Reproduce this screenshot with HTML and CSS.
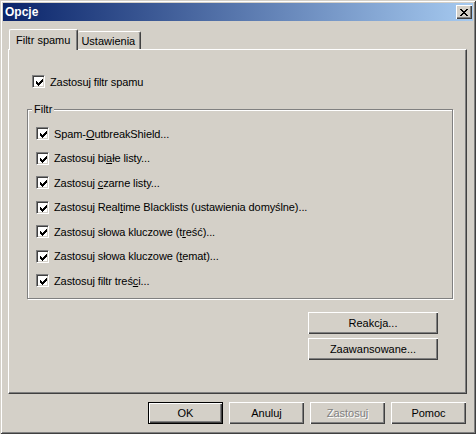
FILE: index.html
```html
<!DOCTYPE html>
<html lang="pl">
<head>
<meta charset="UTF-8">
<title>Opcje</title>
<link rel="stylesheet" href="styles.css">
</head>
<body>
<div class="window">
    <div class="titlebar">
        <span class="title">Opcje</span>
        <button class="close" type="button">
            <svg width="8" height="7" viewBox="0 0 8 7" shape-rendering="crispEdges">
                <path d="M0 0h2v1h-2zM6 0h2v1h-2zM1 1h2v1h-2zM5 1h2v1h-2zM2 2h4v1h-4zM3 3h2v1h-2zM2 4h4v1h-4zM1 5h2v1h-2zM5 5h2v1h-2zM0 6h2v1h-2zM6 6h2v1h-2z" fill="#000"/>
            </svg>
        </button>
    </div>
    <div class="client">
        <div class="tabs">
            <div class="tab active">Filtr spamu</div>
            <div class="tab">Ustawienia</div>
        </div>
        <div class="panel">
            <label class="check main-check"><span class="box"></span><span>Zastosuj filtr spamu</span></label>

            <div class="group">
                <span class="group-title">Filtr</span>
                <label class="check"><span class="box"></span><span>Spam-<u>O</u>utbreakShield...</span></label>
                <label class="check"><span class="box"></span><span>Zastosuj bi<u>a</u>łe listy...</span></label>
                <label class="check"><span class="box"></span><span>Zastosuj <u>c</u>zarne listy...</span></label>
                <label class="check"><span class="box"></span><span>Zastosuj Real<u>t</u>ime Blacklists (ustawienia domyślne)...</span></label>
                <label class="check"><span class="box"></span><span>Zastosuj słowa kluczowe (t<u>r</u>eść)...</span></label>
                <label class="check"><span class="box"></span><span>Zastosuj słowa kluczowe (<u>t</u>emat)...</span></label>
                <label class="check"><span class="box"></span><span>Zastosuj filtr treś<u>c</u>i...</span></label>
            </div>

            <div class="side-buttons">
                <button class="btn wide" type="button">Reakcja...</button>
                <button class="btn wide" type="button">Zaawansowane...</button>
            </div>
        </div>
        <div class="footer">
            <button class="btn default" type="button">OK</button>
            <button class="btn" type="button">Anuluj</button>
            <button class="btn" type="button" disabled>Zastosuj</button>
            <button class="btn" type="button">Pomoc</button>
        </div>
    </div>
</div>
<script>
    // every option starts switched on
    document.querySelectorAll('.box').forEach(function (box) {
        box.innerHTML = '<svg width="7" height="7" viewBox="0 0 7 7" shape-rendering="crispEdges">' +
            '<path d="M0 2h1v3h-1zM1 3h1v3h-1zM2 4h1v3h-1zM3 3h1v3h-1zM4 2h1v3h-1zM5 1h1v3h-1zM6 0h1v3h-1z" fill="#000"/></svg>';
    });
</script>
</body>
</html>
```

FILE: styles.css
```css
body {
    margin: 0;
    padding: 0;
    background-color: #d4d0c8;
    font-family: "Liberation Sans", Arial, sans-serif;
    font-size: 11px;
    color: #000;
}

.window {
    width: 476px;
    height: 434px;
    box-sizing: border-box;
    padding: 3px;
    background-color: #d4d0c8;
    box-shadow: inset 1px 1px #d4d0c8, inset -1px -1px #404040,
                inset 2px 2px #fff, inset -2px -2px #808080;
}

.titlebar {
    height: 18px;
    display: flex;
    align-items: center;
    justify-content: space-between;
    padding-left: 2px;
    background: linear-gradient(to right, #0a246a, #a6caf0);
}

.title {
    color: #fff;
    font-weight: bold;
    font-size: 12px;
}

.close {
    width: 16px;
    height: 14px;
    margin-right: 1px;
    padding: 0;
    border: none;
    background-color: #d4d0c8;
    display: flex;
    align-items: center;
    justify-content: center;
    box-shadow: inset 1px 1px #fff, inset -1px -1px #404040, inset -2px -2px #808080;
}

.client {
    padding: 8px 6px 0 5px;
}

/* tab strip */
.tabs {
    display: flex;
    align-items: flex-end;
    height: 20px;
    padding-left: 1px;
}

.tab {
    height: 18px;
    box-sizing: border-box;
    padding: 3px 5px 0 3px;
    border-top: 1px solid #fff;
    border-left: 1px solid #fff;
    border-right: 1px solid #404040;
    box-shadow: inset -1px 0 #808080;
    border-radius: 2px 2px 0 0;
}

.tab.active {
    height: 21px;
    margin-bottom: -1px;
    padding: 4px 7px 0 6px;
    position: relative;
    z-index: 1;
    background-color: #d4d0c8;
}

.tab + .tab {
    border-left: none;
    padding-left: 3px;
}

.panel {
    height: 345px;
    box-sizing: border-box;
    padding: 25px 0 0 23px;
    border: 1px solid;
    border-color: #fff #404040 #404040 #fff;
    box-shadow: inset -1px -1px #808080;
    display: flex;
    flex-direction: column;
}

/* checkboxes */
.check {
    display: flex;
    align-items: center;
    height: 13px;
    white-space: nowrap;
    letter-spacing: -0.1px;
}

.box {
    width: 13px;
    height: 13px;
    box-sizing: border-box;
    margin-right: 5px;
    padding: 3px 0 0 3px;
    background-color: #fff;
    border: 1px solid;
    border-color: #808080 #fff #fff #808080;
    box-shadow: inset 1px 1px #404040, inset -1px -1px #d4d0c8;
    flex-shrink: 0;
}

.box svg {
    display: block;
}

u {
    text-decoration: underline;
    text-underline-offset: 1px;
}

/* "Filtr" group */
.group {
    position: relative;
    width: 426px;
    height: 190px;
    box-sizing: border-box;
    margin: 21px 0 0 -5px;
    padding: 17px 0 0 8px;
    border: 1px solid #808080;
    box-shadow: inset 1px 1px #fff, 1px 1px #fff;
    display: flex;
    flex-direction: column;
    gap: 11.5px;
}

.group-title {
    position: absolute;
    top: -7px;
    left: 4px;
    padding: 0 2px;
    background-color: #d4d0c8;
}

.side-buttons {
    display: flex;
    flex-direction: column;
    align-items: flex-end;
    gap: 4px;
    margin: 13px 28px 0 0;
}

/* push buttons */
.btn {
    width: 75px;
    height: 22px;
    padding: 0;
    border: none;
    background-color: #d4d0c8;
    font-family: "Liberation Sans", Arial, sans-serif;
    font-size: 11px;
    color: #000;
    box-shadow: inset 1px 1px #fff, inset -1px -1px #404040, inset -2px -2px #808080;
}

.btn.wide {
    width: 130px;
}

.btn.default {
    box-shadow: inset 0 0 0 1px #000, inset 2px 2px #fff, inset -2px -2px #404040, inset -3px -3px #808080;
}

.btn:disabled {
    color: #808080;
    text-shadow: 1px 1px #fff;
}

.footer {
    display: flex;
    justify-content: flex-end;
    gap: 6px;
    margin-top: 8px;
    padding-right: 1px;
}
```
